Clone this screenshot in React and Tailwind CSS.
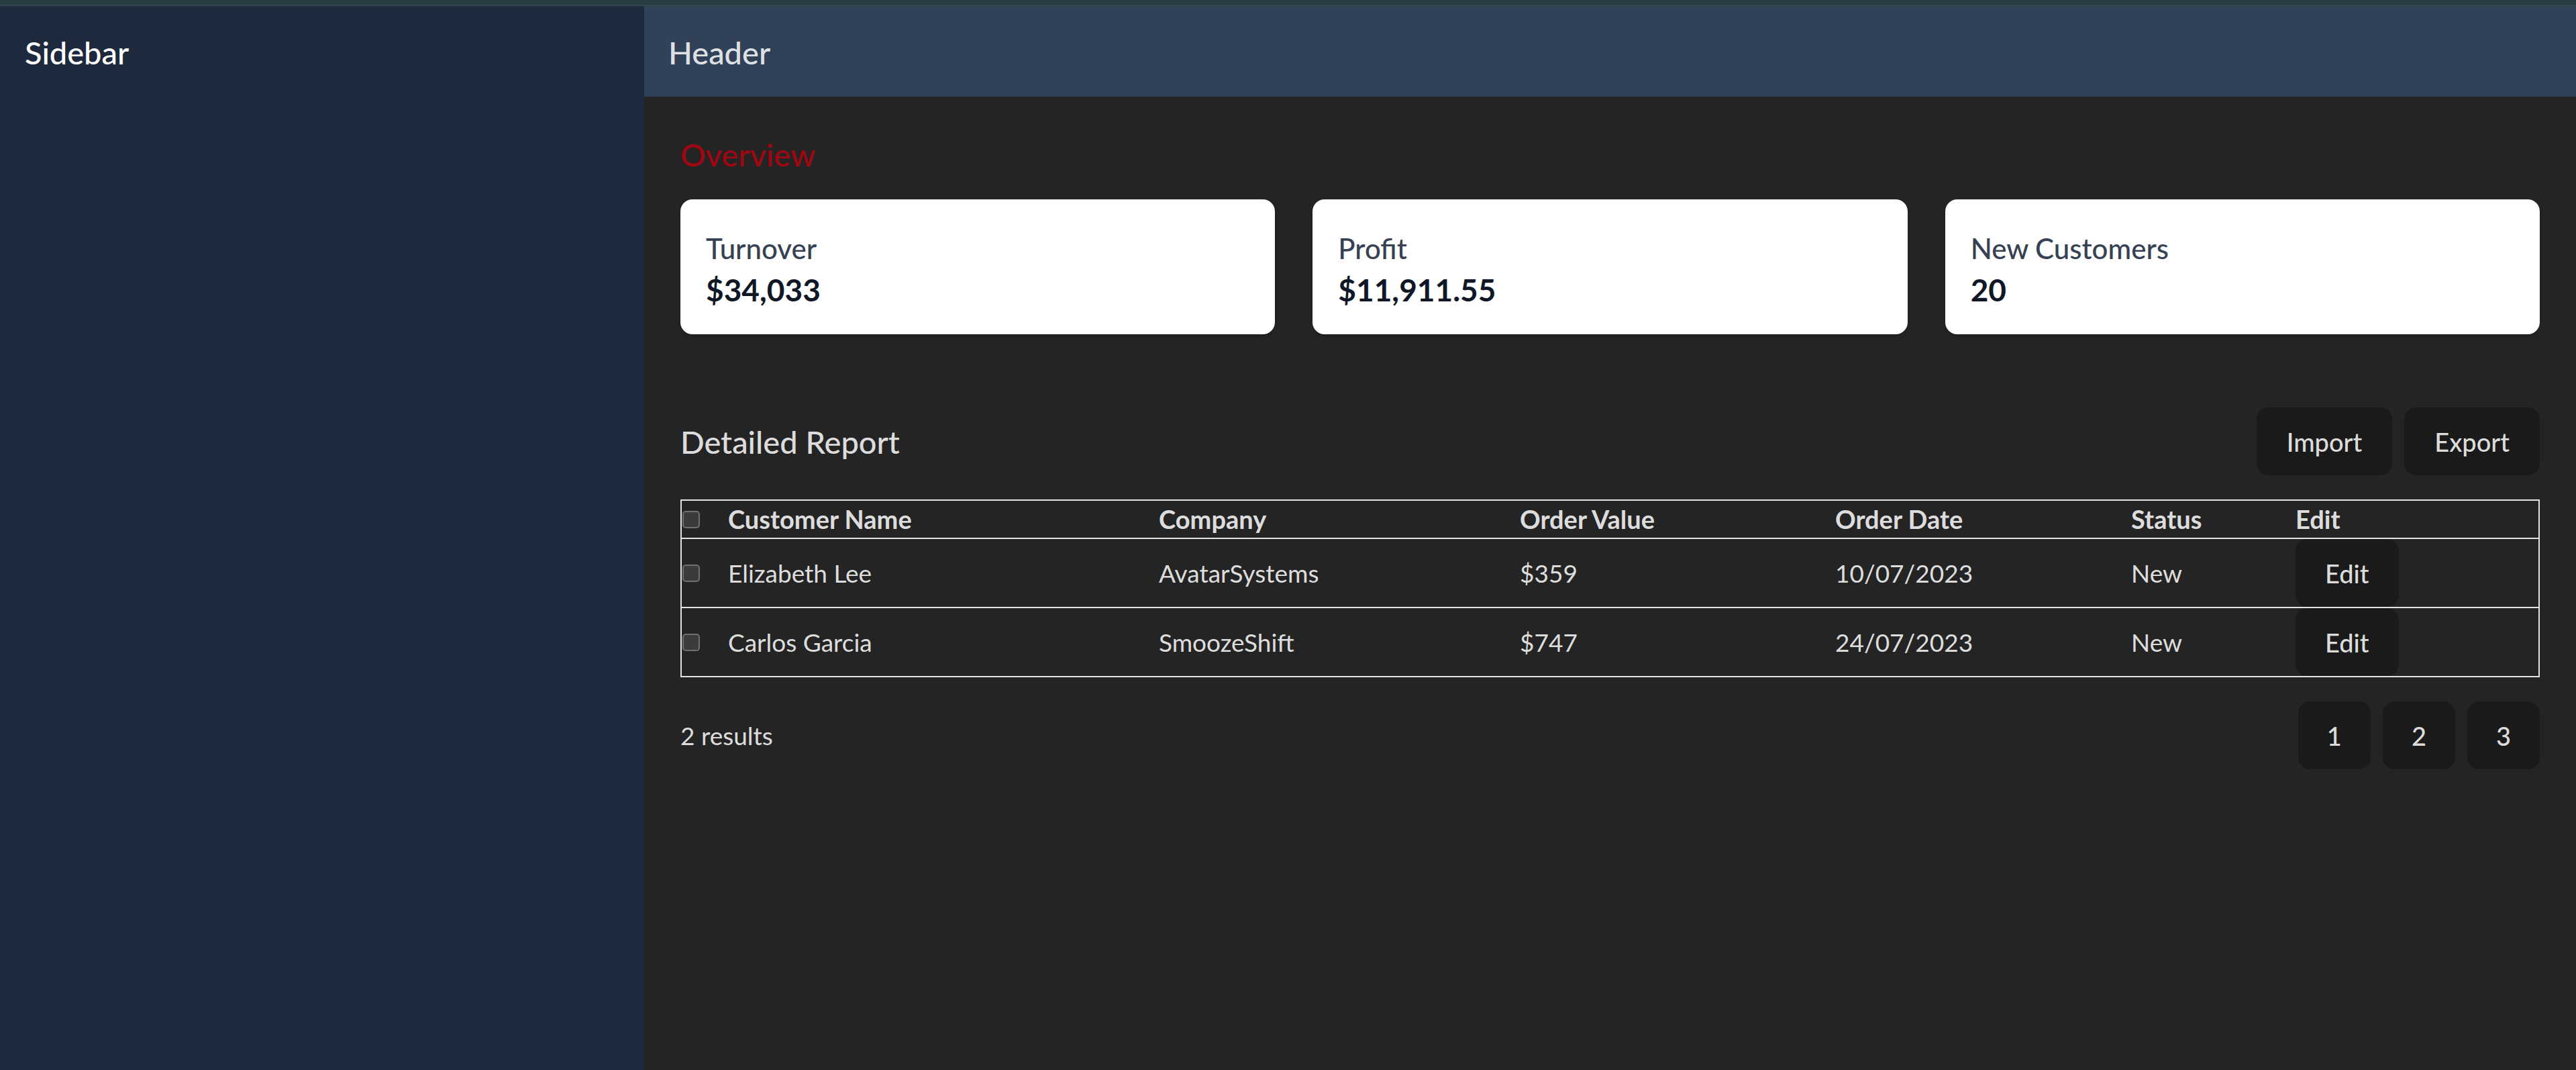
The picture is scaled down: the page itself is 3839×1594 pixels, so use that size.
import React from "react";

const rows = [
  { name: "Elizabeth Lee", company: "AvatarSystems", value: "$359", date: "10/07/2023", status: "New" },
  { name: "Carlos Garcia", company: "SmoozeShift", value: "$747", date: "24/07/2023", status: "New" },
];

const cards = [
  { label: "Turnover", value: "$34,033" },
  { label: "Profit", value: "$11,911.55" },
  { label: "New Customers", value: "20" },
];

const gridCols = "grid grid-cols-[69px_642px_538px_470px_441px_245px_1fr]";

function Checkbox() {
  return <div className="ml-[1px] h-[26px] w-[26px] rounded-[5px] border-[2px] border-[#6f6f6f] bg-[#3b3b3b]" />;
}

function Btn({ children, className = "px-[44px]" }) {
  return (
    <button
      className={
        "h-[101px] rounded-[18px] border border-transparent bg-[#1a1a1a] text-[38px] leading-[56px] font-medium text-[#ffffffde] " +
        className
      }
    >
      {children}
    </button>
  );
}

export default function App() {
  return (
    <div className="flex h-screen flex-col bg-[#242424] font-['Lato',sans-serif] text-[#ffffffde]">
      <div className="h-[7px] shrink-0 bg-[#283c42]" />
      <div className="h-[2px] shrink-0 bg-[#34474c]" />
      <div className="flex flex-1">
        <aside className="w-[960px] shrink-0 bg-slate-800 p-[37px]">
          <h2 className="text-[47px] leading-[64px] font-medium text-white">Sidebar</h2>
        </aside>
        <div className="flex flex-1 flex-col">
          <header className="h-[135px] shrink-0 bg-slate-700 px-[36px] pt-[37px]">
            <h1 className="text-[47px] leading-[64px] font-medium">Header</h1>
          </header>
          <main className="flex-1 px-[54px] pt-[54px]">
            <h2 className="text-[47px] leading-[64px] font-medium text-red-800">Overview</h2>
            <div className="mt-[35px] grid grid-cols-3 gap-[56px]">
              {cards.map((c) => (
                <div key={c.label} className="h-[201px] rounded-[18px] bg-white px-[38px] pt-[44px] shadow-md">
                  <div className="text-[42px] leading-[58px] font-medium text-gray-700">{c.label}</div>
                  <div className="text-[46px] leading-[66px] font-bold text-gray-900">{c.value}</div>
                </div>
              ))}
            </div>

            <div className="mt-[109px] flex items-center justify-between">
              <h2 className="text-[47px] leading-[64px] font-medium">Detailed Report</h2>
              <div className="flex gap-[18px]">
                <Btn>Import</Btn>
                <Btn>Export</Btn>
              </div>
            </div>

            <div className="mt-[36px] border-[2px] border-[#e3e3e3] text-[37px] leading-[55px]">
              <div className={gridCols + " h-[57px] items-center border-b-[2px] border-[#e3e3e3] text-[38px] font-bold"}>
                <Checkbox />
                <div>Customer Name</div>
                <div>Company</div>
                <div>Order Value</div>
                <div>Order Date</div>
                <div>Status</div>
                <div>Edit</div>
              </div>
              {rows.map((r, i) => (
                <div
                  key={r.name}
                  className={
                    gridCols +
                    " items-center " +
                    (i < rows.length - 1 ? "h-[103px] border-b-[2px] border-[#e3e3e3]" : "h-[101px]")
                  }
                >
                  <Checkbox />
                  <div>{r.name}</div>
                  <div>{r.company}</div>
                  <div>{r.value}</div>
                  <div>{r.date}</div>
                  <div>{r.status}</div>
                  <div>
                    <Btn className="px-[43px]">Edit</Btn>
                  </div>
                </div>
              ))}
            </div>

            <div className="mt-[36px] flex items-center justify-between">
              <span className="text-[37px] leading-[55px]">2 results</span>
              <div className="flex gap-[18px]">
                <Btn className="px-[42px]">1</Btn>
                <Btn className="px-[42px]">2</Btn>
                <Btn className="px-[42px]">3</Btn>
              </div>
            </div>
          </main>
        </div>
      </div>
    </div>
  );
}
